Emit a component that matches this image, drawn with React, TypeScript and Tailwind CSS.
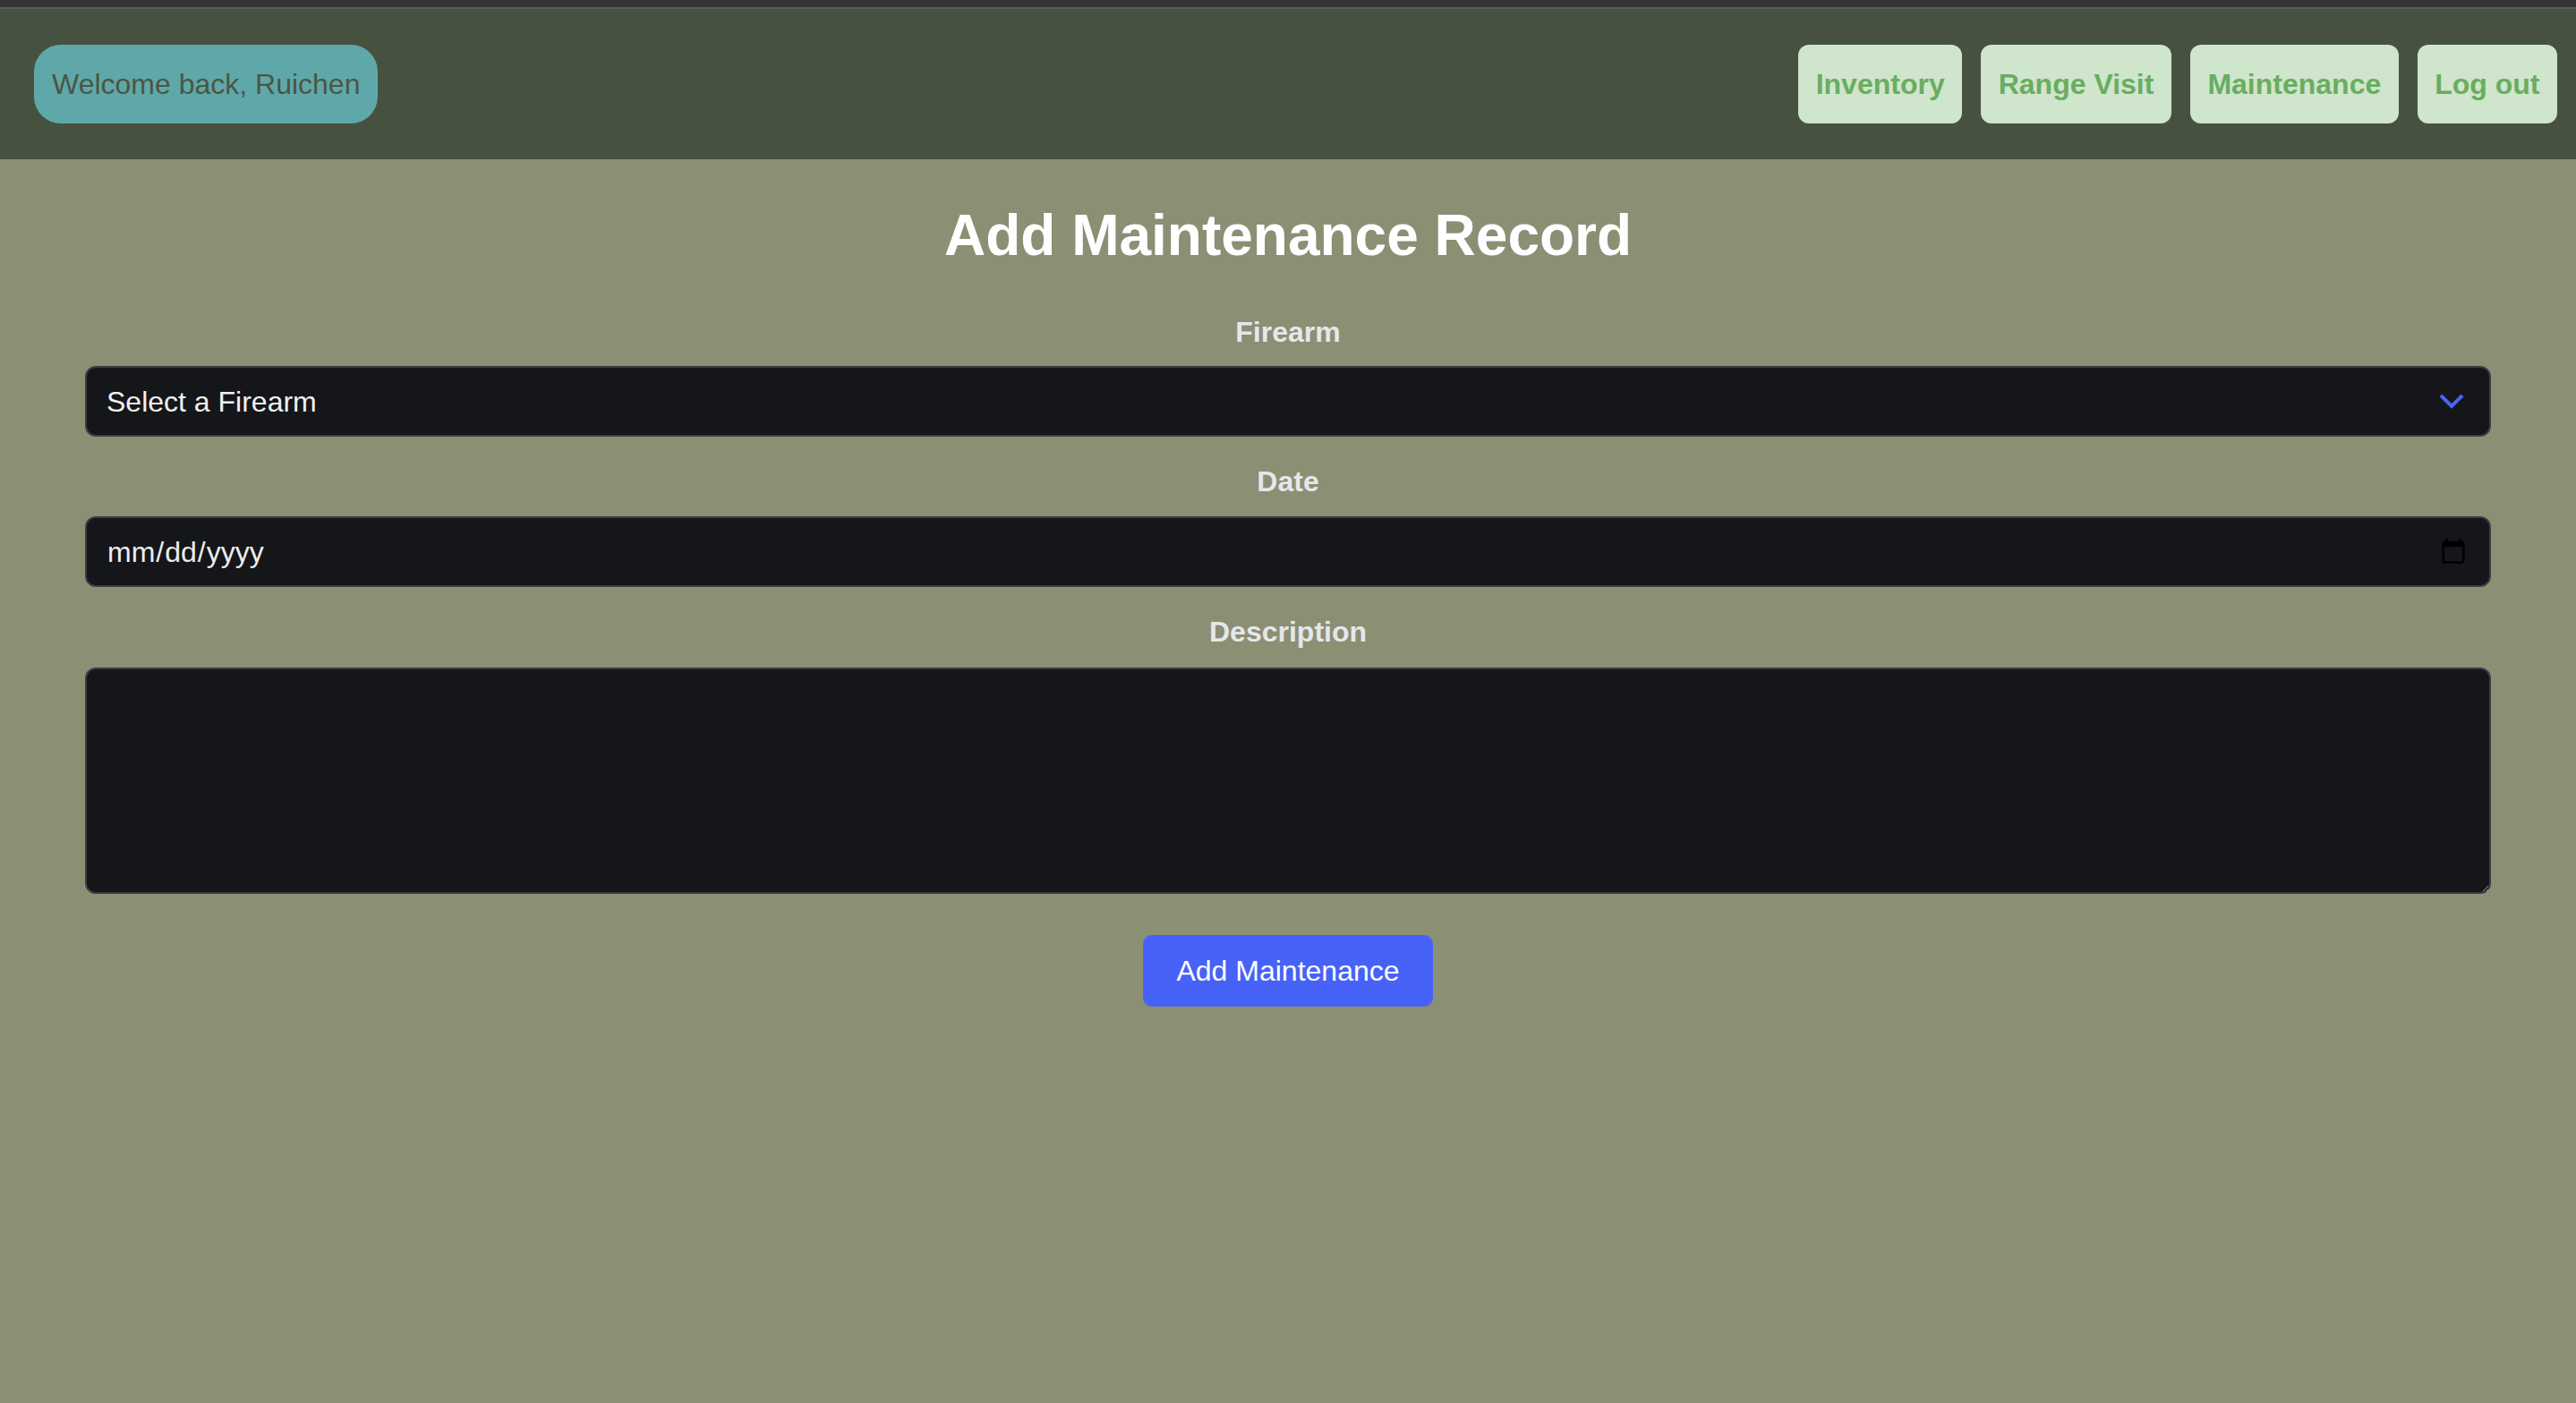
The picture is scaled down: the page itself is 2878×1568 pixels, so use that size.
import React, { useState } from 'react';

const NAV_ITEMS = ['Inventory', 'Range Visit', 'Maintenance', 'Log out'];

export default function App() {
  const [firearm, setFirearm] = useState('');
  const [date, setDate] = useState('');
  const [description, setDescription] = useState('');

  return (
    <div className="min-h-screen bg-[#8b8f74] font-['Liberation_Sans',Arial,sans-serif]">
      {/* window strip */}
      <div className="h-[8px] bg-[#333333]" />
      <div className="h-[2px] bg-[#5b5d58]" />

      {/* Header */}
      <header className="flex items-center justify-between bg-[#46523f] pl-[38px] pr-[21px] py-[40px]">
        <div className="rounded-[30px] bg-[#5fa8aa] px-[20px] py-[20px] text-[32px] leading-[48px] text-[#4a5643]">
          Welcome back, Ruichen
        </div>
        <nav className="flex items-center gap-[21px]">
          {NAV_ITEMS.map((item) => (
            <button
              key={item}
              className="rounded-[12px] bg-[#cfe5cc] px-[19.5px] py-[20px] text-[32px] font-bold leading-[48px] text-[#69ad60]"
            >
              {item}
            </button>
          ))}
        </nav>
      </header>

      {/* Form */}
      <main className="px-[95px]">
        <h1 className="mt-[37px] text-center text-[64px] font-bold leading-[96px] text-white">
          Add Maintenance Record
        </h1>

        <form className="flex flex-col" onSubmit={(e) => e.preventDefault()}>
          <label className="mt-[36px] mb-[14px] block text-center text-[32px] font-bold leading-[48px] text-[#e5e7eb]">
            Firearm
          </label>
          <div className="relative">
            <select
              value={firearm}
              onChange={(e) => setFirearm(e.target.value)}
              className="h-[79px] w-full appearance-none rounded-[12px] border-2 border-[#3b3d45] bg-[#15161a] px-[22px] text-[32px] text-[#f0f0f0] outline-none"
            >
              <option value="">Select a Firearm</option>
            </select>
            <svg
              className="pointer-events-none absolute right-[30px] top-[31px]"
              width="28"
              height="18"
              viewBox="0 0 28 18"
              fill="none"
            >
              <polyline points="2,2 14,14 26,2" stroke="#4a63f5" strokeWidth="4" strokeLinecap="butt" />
            </svg>
          </div>

          <label className="mt-[26px] mb-[15px] block text-center text-[32px] font-bold leading-[48px] text-[#e5e7eb]">
            Date
          </label>
          <input
            type="date"
            value={date}
            onChange={(e) => setDate(e.target.value)}
            className="h-[79px] w-full rounded-[12px] border-2 border-[#3b3d45] bg-[#15161a] px-[22px] text-[32px] text-[#ececec] outline-none"
          />

          <label className="mt-[26px] mb-[16px] block text-center text-[32px] font-bold leading-[48px] text-[#e5e7eb]">
            Description
          </label>
          <textarea
            value={description}
            onChange={(e) => setDescription(e.target.value)}
            className="h-[253px] w-full rounded-[12px] border-2 border-[#3b3d45] bg-[#15161a] px-[22px] py-[14px] text-[32px] text-[#f0f0f0] outline-none"
          />

          <div className="mt-[46px] flex justify-center">
            <button
              type="submit"
              className="rounded-[10px] bg-[#4762f7] px-[37px] py-[16px] text-[32px] leading-[48px] text-white"
            >
              Add Maintenance
            </button>
          </div>
        </form>
      </main>
    </div>
  );
}
